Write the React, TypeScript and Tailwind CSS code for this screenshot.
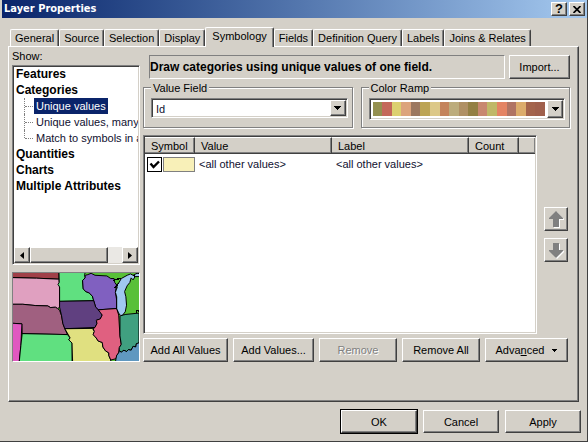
import { useState } from 'react';
import type { ReactNode } from 'react';
import clsx from 'clsx';

const tabs = ['General', 'Source', 'Selection', 'Display', 'Symbology', 'Fields', 'Definition Query', 'Labels', 'Joins & Relates'];

const rampColors = [
  '#949050', '#c4685a', '#dcd070', '#dca47c', '#9c7860', '#bca454', '#dcc888', '#c4845c', '#bcac7c',
  '#b09064', '#948044', '#c88870', '#c0b868', '#e48464', '#b07464', '#dcac6c', '#a4644c', '#a0604c',
];

const raised =
  'border border-t-white border-l-white border-r-[#404040] border-b-[#404040] bg-[#d4d0c8] shadow-[inset_-1px_-1px_#808080]';
const sunken =
  'border border-t-[#808080] border-l-[#808080] border-r-white border-b-white shadow-[inset_1px_1px_#404040,inset_-1px_-1px_#d4d0c8]';

interface PushButtonProps {
  children: ReactNode;
  className?: string;
  disabled?: boolean;
  label?: string;
}

function PushButton({ children, className, disabled, label }: PushButtonProps) {
  return (
    <button
      type="button"
      disabled={disabled}
      aria-label={label}
      className={clsx(
        raised,
        'flex items-center justify-center whitespace-nowrap',
        disabled && 'text-[#808080] [text-shadow:1px_1px_white]',
        className
      )}
    >
      {children}
    </button>
  );
}

function DownArrow() {
  return (
    <svg width="7" height="4" viewBox="0 0 7 4" shapeRendering="crispEdges" aria-hidden="true">
      <path d="M0 0h7v1h-1v1h-1v1h-1v1h-1v-1h-1v-1h-1v-1h-1z" fill="#000" />
    </svg>
  );
}

function TitleBar() {
  return (
    <header className="ml-0.5 flex h-[18px] items-center justify-between bg-linear-to-r from-[#0a246a] to-[#a6caf0] px-0.5">
      <h1 className="font-['DejaVu_Sans_Condensed','DejaVu_Sans',sans-serif] text-[11px] leading-[18px] font-bold text-white">
        Layer Properties
      </h1>
      <div className="flex gap-0.5">
        <PushButton label="Help" className="h-[14px] w-4 text-[13px] font-bold">
          ?
        </PushButton>
        <PushButton label="Close" className="h-[14px] w-4">
          <svg width="8" height="7" viewBox="0 0 8 7" aria-hidden="true">
            <path d="M0.5 0L7.5 7M7.5 0L0.5 7" stroke="#000" strokeWidth="1.7" />
          </svg>
        </PushButton>
      </div>
    </header>
  );
}

function TabStrip({ active, onSelect }: { active: string; onSelect: (tab: string) => void }) {
  return (
    <div role="tablist" className="relative z-10 -mb-px flex items-end pl-0.5">
      {tabs.map((tab) => (
        <button
          key={tab}
          type="button"
          role="tab"
          aria-selected={tab === active}
          onClick={() => onSelect(tab)}
          className={clsx(
            'whitespace-nowrap rounded-t-[2px] border-x border-t border-t-white border-l-white border-r-[#404040] shadow-[inset_-1px_0_#808080]',
            tab === active ? 'h-5 bg-[#d4d0c8] px-[6px] pb-1' : 'mb-px h-[17px] px-1'
          )}
        >
          {tab}
        </button>
      ))}
    </div>
  );
}

function TreeGroup({ children }: { children: ReactNode }) {
  return <div className="h-4 pl-0.5 text-[12px] leading-4 font-bold whitespace-nowrap">{children}</div>;
}

function TreeLeaf({ children, selected, last }: { children: ReactNode; selected?: boolean; last?: boolean }) {
  return (
    <div className="flex h-4 items-center pl-[10px]">
      <span className={clsx('w-px shrink-0 self-start border-l border-dotted border-[#808080]', last ? 'h-2' : 'h-4')} />
      <span className="mr-px w-2 shrink-0 border-t border-dotted border-[#808080]" />
      <span className={clsx('px-0.5 leading-4 whitespace-nowrap', selected ? 'bg-[#0a246a] text-white' : 'text-[#101030]')}>
        {children}
      </span>
    </div>
  );
}

function ScrollBar() {
  return (
    <div className="flex h-4 bg-[#eae8e4]">
      <PushButton label="Scroll left" className="w-4">
        <svg width="4" height="7" viewBox="0 0 4 7" aria-hidden="true">
          <path d="M4 0v7L0 3.5z" />
        </svg>
      </PushButton>
      <div className={clsx(raised, 'w-[78px]')} />
      <div className="flex-1" />
      <PushButton label="Scroll right" className="w-4">
        <svg width="4" height="7" viewBox="0 0 4 7" aria-hidden="true">
          <path d="M0 0v7l4-3.5z" />
        </svg>
      </PushButton>
    </div>
  );
}

function MapPreview() {
  return (
    <svg
      viewBox="36 247 384 270"
      preserveAspectRatio="none"
      className="h-[90px] w-full border border-t-[#808080] border-r-white border-b-white border-l-[#808080]"
      stroke="#000"
      strokeWidth="3"
      strokeLinejoin="round"
      shapeRendering="crispEdges"
      role="img"
      aria-label="Map preview"
    >
      <rect x="30" y="240" width="400" height="290" fill="#58c038" />
      <path d="M30 240H176V266L108 263L30 261z" fill="#a04048" />
      <path d="M30 261L108 263L176 266L178 290V352L172 356L165 352L150 353L142 348L105 347L66 343L30 343z" fill="#e0a0c0" />
      <path d="M30 343L66 343L105 347L142 348L150 353L165 352L172 356L178 362L184 378L188 402L194 418L202 436L64 433L63 403L30 401z" fill="#a06080" />
      <path d="M30 401L63 403L60 470L54 530H30z" fill="#e058c0" />
      <path d="M64 433L202 436L210 446L206 452L216 462V530H54L60 470z" fill="#60e080" />
      <path d="M176 240H258L254 252L256 262L248 270L250 296L258 304L268 308L278 318L282 332L178 334L178 290L173 282L177 276z" fill="#60e080" />
      <path d="M256 254L264 252L274 248L286 254L322 256L334 264L344 264L346 276L352 284L348 306L352 330V356L296 360L288 352L282 332L278 318L268 308L258 304L250 296L248 270L256 262z" fill="#8060c0" />
      <path d="M178 334L282 332L288 352L296 360L302 366L308 376L302 388L290 392L292 402L286 414L194 418L188 402L184 378L178 352z" fill="#604080" />
      <path d="M194 418L278 417L284 426L280 436L288 444L296 456L308 460L310 474L318 486L328 492L328 500L334 514L330 530H218L216 462L206 452L210 446z" fill="#e0e080" />
      <path d="M296 360L352 356L358 376L362 440L366 466L360 476L358 492L352 500L350 510L334 514L328 500L328 492L318 486L310 474L308 460L296 456L288 444L280 436L284 426L280 418L286 414L292 402L290 392L302 388L308 376z" fill="#e06080" />
      <path d="M362 378L380 374L420 370V462L412 464L410 474L402 472L396 484L388 482L382 488L374 484L366 490L360 486V476L366 466L362 440z" fill="#40a080" />
      <path d="M360 486L366 490L374 484L382 488L388 482L396 484L402 472L410 474L412 464L430 458V530H346L350 510L352 500L358 492z" fill="#6098c0" />
      <path d="M350 284L358 278L366 264L384 254L394 250L402 254L414 248L430 250V258L408 258L402 268L396 262L392 276L384 286L376 304L380 320L382 346L378 366L370 376L364 378L358 370L352 356V320L348 306L354 290z" fill="#a0c8f0" />
      <path d="M342 270L352 266L366 264M346 294L358 278M402 254L408 258M412 370L414 362L420 364" fill="none" strokeWidth="4" />
    </svg>
  );
}

function Sidebar() {
  return (
    <div className="flex w-32 shrink-0 flex-col">
      <div className="h-4 leading-[14px]">Show:</div>
      <div className={clsx(sunken, 'flex flex-1 flex-col overflow-hidden bg-white px-px pb-px')}>
        <div className="flex-1 overflow-hidden">
          <TreeGroup>Features</TreeGroup>
          <TreeGroup>Categories</TreeGroup>
          <TreeLeaf selected>Unique values</TreeLeaf>
          <TreeLeaf>Unique values, many fields</TreeLeaf>
          <TreeLeaf last>Match to symbols in a style</TreeLeaf>
          <TreeGroup>Quantities</TreeGroup>
          <TreeGroup>Charts</TreeGroup>
          <TreeGroup>Multiple Attributes</TreeGroup>
        </div>
        <ScrollBar />
      </div>
      <div className="mt-[7px]">
        <MapPreview />
      </div>
    </div>
  );
}

function GroupBox({ title, children }: { title: string; children: ReactNode }) {
  return (
    <fieldset className="min-w-0 flex-1 border border-[#808080] pr-1 pb-[7px] pl-[7px] shadow-[1px_1px_white,inset_1px_1px_white]">
      <legend className="h-4 bg-[#d4d0c8] px-0.5 leading-[18px]">{title}</legend>
      {children}
    </fieldset>
  );
}

function ValueField() {
  return (
    <div className={clsx(sunken, 'relative mt-[3px] flex h-5 bg-white p-0.5')}>
      <select aria-label="Value Field" className="w-full appearance-none bg-white pl-0.5 leading-4 text-[#101030] outline-none">
        <option>Id</option>
      </select>
      <span className={clsx(raised, 'pointer-events-none absolute inset-y-px right-px flex w-4 items-center justify-center')}>
        <DownArrow />
      </span>
    </div>
  );
}

function ColorRamp() {
  return (
    <button
      type="button"
      aria-haspopup="listbox"
      aria-label="Color Ramp"
      className={clsx(sunken, 'mt-[3px] flex h-[22px] w-full bg-white p-px')}
    >
      <span className="m-0.5 flex flex-1 self-stretch">
        {rampColors.map((color) => (
          <span key={color} className="flex-1" style={{ backgroundColor: color }} />
        ))}
      </span>
      <span className={clsx(raised, 'flex w-4 items-center justify-center self-stretch')}>
        <DownArrow />
      </span>
    </button>
  );
}

function ValueTable() {
  const [checked, setChecked] = useState(true);
  const headCell =
    'h-[17px] border-t border-t-white border-r border-r-[#404040] border-b border-b-[#404040] bg-[#d4d0c8] p-0 pl-[6px] text-left font-normal leading-[14px] shadow-[inset_-1px_-1px_#808080]';

  return (
    <div className={clsx(sunken, 'min-w-0 flex-1 bg-white p-px')}>
      <table className="w-full table-fixed border-separate border-spacing-0">
        <thead>
          <tr>
            <th className={clsx(headCell, 'w-[50px]')}>Symbol</th>
            <th className={clsx(headCell, 'w-[137px]')}>Value</th>
            <th className={clsx(headCell, 'w-[137px]')}>Label</th>
            <th className={clsx(headCell, 'w-[50px]')}>Count</th>
            <td className={clsx(headCell, 'border-r-0')} />
          </tr>
        </thead>
        <tbody className="text-[#101030]">
          <tr>
            <td className="p-0 pt-0.5 pl-0.5">
              <div className="flex items-center gap-px">
                <span className="relative flex size-[15px]">
                  <input
                    type="checkbox"
                    aria-label="Show all other values"
                    checked={checked}
                    onChange={(e) => setChecked(e.target.checked)}
                    className="peer size-[15px] appearance-none border border-black bg-white"
                  />
                  <svg
                    viewBox="0 0 15 15"
                    className="pointer-events-none absolute inset-0 hidden peer-checked:block"
                    aria-hidden="true"
                  >
                    <path d="M3.5 6.5L6.5 10L12 4.5" fill="none" stroke="#000" strokeWidth="2.4" />
                  </svg>
                </span>
                <span className="h-[15px] flex-1 border border-[#808080] bg-[#f8f0b8]" />
              </div>
            </td>
            <td className="p-0 pt-0.5 pl-1">&lt;all other values&gt;</td>
            <td className="p-0 pt-0.5 pl-1">&lt;all other values&gt;</td>
            <td />
            <td />
          </tr>
        </tbody>
      </table>
    </div>
  );
}

function MoveArrow({ down }: { down?: boolean }) {
  return (
    <PushButton label={down ? 'Move down' : 'Move up'} className="size-6">
      <svg width="16" height="17" viewBox="0 0 16 17" aria-hidden="true">
        {down ? (
          <>
            <path d="M6 2H12V9H16V10L9 17L7 15z" fill="#fff" />
            <path d="M8 16L15 9V8H11V1H5V8H1V9z" fill="#808080" />
          </>
        ) : (
          <>
            <path d="M9 1L16 8V9H12V17H6V16z" fill="#fff" />
            <path d="M8 0L15 7V8H11V16H5V8H1V7z" fill="#808080" />
          </>
        )}
      </svg>
    </PushButton>
  );
}

function SymbologyPage() {
  return (
    <div className="flex min-w-0 flex-1 flex-col">
      <div className="mt-[6px] flex h-6 gap-1 pl-[6px]">
        <div className="flex flex-1 items-center border border-t-[#808080] border-l-[#808080] border-r-white border-b-white text-[12px] font-bold whitespace-nowrap">
          Draw categories using unique values of one field.
        </div>
        <PushButton className="w-[61px]">Import...</PushButton>
      </div>

      <div className="flex gap-2">
        <GroupBox title="Value Field">
          <ValueField />
        </GroupBox>
        <GroupBox title="Color Ramp">
          <ColorRamp />
        </GroupBox>
      </div>

      <div className="mt-[7px] flex flex-1 gap-[7px]">
        <ValueTable />
        <div className="flex flex-col justify-center gap-[7px] pr-0.5">
          <MoveArrow />
          <MoveArrow down />
        </div>
      </div>

      <div className="mt-1 flex h-6 gap-[5px] pr-0.5">
        <PushButton className="w-[85px]">Add All Values</PushButton>
        <PushButton className="w-[81px]">Add Values...</PushButton>
        <PushButton className="w-[78px]" disabled>
          Remove
        </PushButton>
        <PushButton className="w-[78px]">Remove All</PushButton>
        <PushButton className="flex-1 gap-2">
          <span>
            Adva<u>n</u>ced
          </span>
          <svg width="5" height="3" viewBox="0 0 5 3" shapeRendering="crispEdges" aria-hidden="true">
            <path d="M0 0h5v1h-1v1h-1v1h-1v-1h-1v-1h-1z" />
          </svg>
        </PushButton>
      </div>
    </div>
  );
}

export default function App() {
  const [activeTab, setActiveTab] = useState('Symbology');

  return (
    <div className="flex min-h-screen flex-col border-r border-b border-[#404040] bg-[#d4d0c8] font-['Liberation_Sans',Arial,sans-serif] text-[11px] leading-4 text-black">
      <TitleBar />
      <main className="flex flex-1 flex-col px-2 pt-[9px]">
        <TabStrip active={activeTab} onSelect={setActiveTab} />
        <section
          role="tabpanel"
          className="flex flex-1 gap-[3px] border border-t-white border-l-white border-r-[#404040] border-b-[#404040] pt-0.5 pr-2 pb-[39px] pl-[3px] shadow-[inset_-1px_-1px_#808080]"
        >
          <Sidebar />
          <SymbologyPage />
        </section>
      </main>
      <footer className="flex justify-end gap-[6px] px-[6px] py-2">
        <PushButton className="h-[23px] w-[76px] outline outline-black">OK</PushButton>
        <PushButton className="h-[23px] w-[76px]">Cancel</PushButton>
        <PushButton className="h-[23px] w-[76px]">Apply</PushButton>
      </footer>
    </div>
  );
}
